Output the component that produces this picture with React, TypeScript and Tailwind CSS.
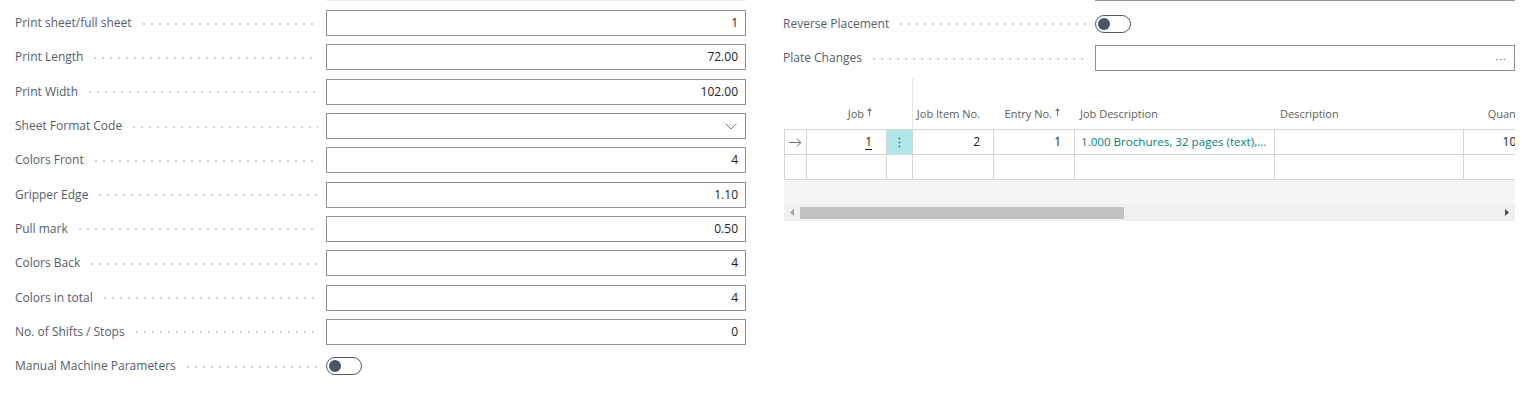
import React from 'react';

const font = { fontFamily: '"Open Sans", "Noto Sans", sans-serif' };

type Field = { label: string; value?: string; kind?: 'text' | 'select' | 'toggle' };

const leftFields: Field[] = [
  { label: 'Print sheet/full sheet', value: '1' },
  { label: 'Print Length', value: '72.00' },
  { label: 'Print Width', value: '102.00' },
  { label: 'Sheet Format Code', kind: 'select' },
  { label: 'Colors Front', value: '4' },
  { label: 'Gripper Edge', value: '1.10' },
  { label: 'Pull mark', value: '0.50' },
  { label: 'Colors Back', value: '4' },
  { label: 'Colors in total', value: '4' },
  { label: 'No. of Shifts / Stops', value: '0' },
  { label: 'Manual Machine Parameters', kind: 'toggle' },
];

const Toggle = () => (
  <div className="w-[36px] h-[18px] rounded-full border border-[#505c6d] flex items-center px-[2px]">
    <div className="w-[12px] h-[12px] rounded-full bg-[#4b5567]" />
  </div>
);

const Caption = ({ text, w }: { text: string; w: string }) => (
  <div className={`${w} shrink-0 flex items-center pr-[8px]`}>
    <span className="text-[12px] text-[#535e6d] whitespace-nowrap">{text}</span>
    <span className="flex-1 ml-[8px] mt-[1px] h-[2px] bg-[radial-gradient(circle,#cdd0d4_0.7px,transparent_1px)] bg-[length:8px_2px] bg-repeat-x" />
  </div>
);

const FieldRow = ({ f }: { f: Field }) => (
  <div className="flex items-center h-[34.3px]">
    <Caption text={f.label} w="w-[311px]" />
    {f.kind === 'toggle' ? (
      <Toggle />
    ) : (
      <div className="w-[420px] h-[26px] border border-[#8b939e] flex items-center justify-end px-[7px] text-[12px] text-[#212121]">
        {f.kind === 'select' ? (
          <svg width="12" height="7" viewBox="0 0 12 7" className="mr-[1px]">
            <path d="M0.5 0.5 L6 6 L11.5 0.5" fill="none" stroke="#7a818c" strokeWidth="1" />
          </svg>
        ) : (
          f.value
        )}
      </div>
    )}
  </div>
);

const SortArrow = () => (
  <svg width="5" height="8" viewBox="0 0 5 8" className="inline-block ml-[3px] self-start mt-[2px]">
    <path d="M2.5 8 V2" stroke="#7a7876" strokeWidth="1" />
    <path d="M0 3 L2.5 0 L5 3 Z" fill="#7a7876" />
  </svg>
);

const cols = ['w-[22px]', 'w-[80px]', 'w-[26px]', 'w-[81px]', 'w-[81px]', 'w-[200px]', 'w-[189px]', 'w-[83px]'];

const App: React.FC = () => {
  return (
    <div className="w-[1523px] h-[398px] bg-white overflow-hidden" style={font}>
      <div className="flex pl-[15px]">
        {/* Left column */}
        <div className="w-[731px] shrink-0">
          <div className="flex h-[1px]">
            <div className="w-[311px]" />
            <div className="w-[420px] h-[1px] bg-[#eceef0]" />
          </div>
          <div className="pt-[5px]">
            {leftFields.map((f) => (
              <FieldRow key={f.label} f={f} />
            ))}
          </div>
        </div>

        {/* Right column */}
        <div className="ml-[37px] w-[732px] shrink-0">
          <div className="flex h-[1px]">
            <div className="w-[312px]" />
            <div className="w-[420px] h-[1px] bg-[#8b939e]" />
          </div>
          <div className="flex items-center h-[35px] mt-[5px]">
            <Caption text="Reverse Placement" w="w-[312px]" />
            <Toggle />
          </div>
          <div className="flex items-center h-[34px]">
            <Caption text="Plate Changes" w="w-[312px]" />
            <div className="w-[420px] h-[26px] border border-[#8b939e] flex items-center justify-end px-[7px]">
              <span className="text-[11px] text-[#6b7280] tracking-[1px] leading-none">···</span>
            </div>
          </div>

          {/* Lines table */}
          <div className="mt-[3px] ml-[1px] w-[731px] overflow-hidden">
            <div className="flex h-[51px] text-[11px] text-[#605e5c]">
              <div className="w-[22px] shrink-0" />
              <div className="w-[80px] shrink-0 flex items-end justify-end pr-[14px] pb-[7px]">
                <span className="flex">Job<SortArrow /></span>
              </div>
              <div className="w-[26px] shrink-0" />
              <div className="w-[81px] shrink-0 flex items-end justify-end pr-[13px] pb-[7px] border-l border-[#e5e7eb]">
                Job Item No.
              </div>
              <div className="w-[81px] shrink-0 flex items-end justify-end pr-[14px] pb-[7px]">
                <span className="flex">Entry No.<SortArrow /></span>
              </div>
              <div className="w-[200px] shrink-0 flex items-end pl-[6px] pb-[7px]">Job Description</div>
              <div className="w-[189px] shrink-0 flex items-end pl-[6px] pb-[7px]">Description</div>
              <div className="w-[83px] shrink-0 flex items-end justify-end pr-[14px] pb-[7px] whitespace-nowrap">Quantity</div>
            </div>

            <div className="border-t border-[#d5d6d8] text-[12px] text-[#212121]">
              <div className="flex h-[25px] border-b border-[#d5d6d8]">
                <div className="w-[22px] shrink-0 border-l border-[#d5d6d8] flex items-center justify-center">
                  <svg width="13" height="9" viewBox="0 0 13 9">
                    <path d="M0 4.5 H12 M8 0.8 L12 4.5 L8 8.2" fill="none" stroke="#6f6f6f" strokeWidth="1" />
                  </svg>
                </div>
                <div className="w-[80px] shrink-0 border-l border-[#d5d6d8] flex items-center justify-end pr-[14px]">
                  <span className="underline underline-offset-[3px]">1</span>
                </div>
                <div className="w-[26px] shrink-0 border-l border-[#d5d6d8] bg-[#b2e7ea] flex items-center justify-center">
                  <svg width="3" height="11" viewBox="0 0 3 11">
                    <circle cx="1.5" cy="1.5" r="1" fill="#3b7f86" />
                    <circle cx="1.5" cy="5.5" r="1" fill="#3b7f86" />
                    <circle cx="1.5" cy="9.5" r="1" fill="#3b7f86" />
                  </svg>
                </div>
                <div className="w-[81px] shrink-0 border-l border-[#d5d6d8] flex items-center justify-end pr-[13px]">2</div>
                <div className="w-[81px] shrink-0 border-l border-[#d5d6d8] flex items-center justify-end pr-[13px]">1</div>
                <div className="w-[200px] shrink-0 border-l border-[#d5d6d8] flex items-center pl-[6px] text-[#00827b] whitespace-nowrap overflow-hidden text-[11.6px]">
                  1.000 Brochures, 32 pages (text),...
                </div>
                <div className="w-[189px] shrink-0 border-l border-[#d5d6d8]" />
                <div className="w-[83px] shrink-0 border-l border-[#d5d6d8] flex items-center justify-end pr-[16px]">1000</div>
              </div>
              <div className="flex h-[25px] border-b border-[#d5d6d8]">
                {cols.map((c, i) => (
                  <div key={i} className={`${c} shrink-0 border-l border-[#d5d6d8]`} />
                ))}
              </div>
            </div>
            <div className="h-[24px] bg-[#f4f5f6]" />
            <div className="h-[17px] bg-[#f0f0f0] flex items-center">
              <div className="w-[16px] flex items-center justify-center">
                <svg width="4" height="7" viewBox="0 0 4 7">
                  <path d="M4 0 L0 3.5 L4 7 Z" fill="#a3a3a3" />
                </svg>
              </div>
              <div className="w-[324px] h-[12px] bg-[#c1c1c1]" />
              <div className="flex-1" />
              <div className="w-[16px] flex items-center justify-center">
                <svg width="4" height="7" viewBox="0 0 4 7">
                  <path d="M0 0 L4 3.5 L0 7 Z" fill="#505050" />
                </svg>
              </div>
            </div>
          </div>
        </div>
      </div>
    </div>
  );
};

export default App;
